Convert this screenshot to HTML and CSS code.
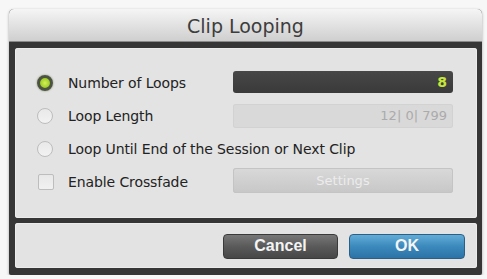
FILE: index.html
```html
<!DOCTYPE html>
<html>
<head>
<meta charset="utf-8">
<link rel="stylesheet" href="styles.css">
</head>
<body>
<div class="window">
  <div class="titlebar">Clip Looping</div>
  <div class="frame">
    <div class="panel options">
      <div class="row">
        <span class="radio on"></span>
        <span class="label">Number of Loops</span>
        <div class="field dark">8</div>
      </div>
      <div class="row">
        <span class="radio"></span>
        <span class="label">Loop Length</span>
        <div class="field light">12| 0| 799</div>
      </div>
      <div class="row">
        <span class="radio"></span>
        <span class="label">Loop Until End of the Session or Next Clip</span>
      </div>
      <div class="row">
        <span class="check"></span>
        <span class="label">Enable Crossfade</span>
        <div class="field settings">Settings</div>
      </div>
    </div>
    <div class="panel buttons">
      <button class="btn cancel">Cancel</button>
      <button class="btn ok">OK</button>
    </div>
  </div>
</div>
</body>
</html>
```

FILE: styles.css
```css
html, body {
  margin: 0;
  padding: 0;
  background: #f7f7f7;
}
body {
  padding: 9px 0 0 9px;
  font-family: "DejaVu Sans", sans-serif;
}
.window {
  width: 473px;
  height: 266px;
  background: #363636;
  border-radius: 5px 5px 2px 2px;
  display: flex;
  flex-direction: column;
  box-shadow: 0 1px 3px rgba(0,0,0,0.35);
}
.titlebar {
  height: 33px;
  flex: none;
  border-radius: 5px 5px 0 0;
  background: linear-gradient(#f5f5f5, #e2e2e2 50%, #cfcfcf);
  border-bottom: 1px solid #8a8a8a;
  box-sizing: border-box;
  text-align: center;
  line-height: 34px;
  font-size: 19px;
  color: #3d3d3d;
}
.frame {
  flex: 1;
  display: flex;
  flex-direction: column;
  gap: 5px;
  padding: 6px 5px 7px 6px;
}
.panel {
  background: #e3e3e3;
  border-radius: 3px;
  box-shadow: inset 0 0 0 1px #ececec;
}
.options {
  height: 170px;
  padding: 18px 24px 0 22px;
  box-sizing: border-box;
}
.row {
  height: 33px;
  display: flex;
  align-items: center;
}
.radio {
  width: 16px;
  height: 16px;
  border-radius: 50%;
  box-sizing: border-box;
  border: 1px solid #bdbdbd;
  background: linear-gradient(#e9e9e9, #f2f2f2);
  flex: none;
}
.radio.on {
  border: 3px solid #4d5342;
  background: radial-gradient(circle, #d4f05a 0, #a4d12a 60%, #7a9a2a 100%);
  box-shadow: 0 0 2px #7f8a60;
}
.check {
  width: 16px;
  height: 16px;
  margin-left: 1px;
  margin-right: -1px;
  box-sizing: border-box;
  border: 1px solid #bdbdbd;
  border-radius: 2px;
  background: linear-gradient(#e8e8e8, #f1f1f1);
  flex: none;
}
.label {
  margin-left: 15px;
  font-size: 14px;
  letter-spacing: -0.1px;
  color: #222;
  white-space: nowrap;
}
.field {
  margin-left: auto;
  width: 220px;
  box-sizing: border-box;
  border-radius: 3px;
  font-size: 14px;
  text-align: right;
  padding-right: 6px;
}
.field.dark {
  height: 22px;
  line-height: 22px;
  background: linear-gradient(#474747, #3a3a3a);
  color: #c6e63a;
  font-weight: bold;
  margin-top: -1px;
}
.field.light {
  height: 24px;
  line-height: 24px;
  background: #d9d9d9;
  box-shadow: inset 0 0 0 1px #d2d2d2;
  color: #ababab;
  font-size: 13px;
}
.field.settings {
  height: 25px;
  line-height: 25px;
  background: linear-gradient(#d9d9d9, #c7c7c7);
  box-shadow: inset 0 0 0 1px #c4c4c4;
  text-align: center;
  padding-right: 0;
  color: #ececec;
  font-size: 13px;
  margin-top: -2px;
}
.buttons {
  flex: 1;
  display: flex;
  justify-content: flex-end;
  align-items: center;
  gap: 11px;
  padding-right: 12px;
}
.btn {
  height: 25px;
  border-radius: 4px;
  font-family: "Liberation Sans", sans-serif;
  font-weight: bold;
  font-size: 16px;
  color: #f4f4f4;
  padding: 0;
  margin-top: 1px;
}
.cancel {
  width: 115px;
  border: 1px solid #3a3a3a;
  background: linear-gradient(#777, #5a5a5a 50%, #474747);
}
.ok {
  width: 116px;
  border: 1px solid #2b5f86;
  background: linear-gradient(#62acd6, #3b89bd 50%, #2c73a6);
}
```
